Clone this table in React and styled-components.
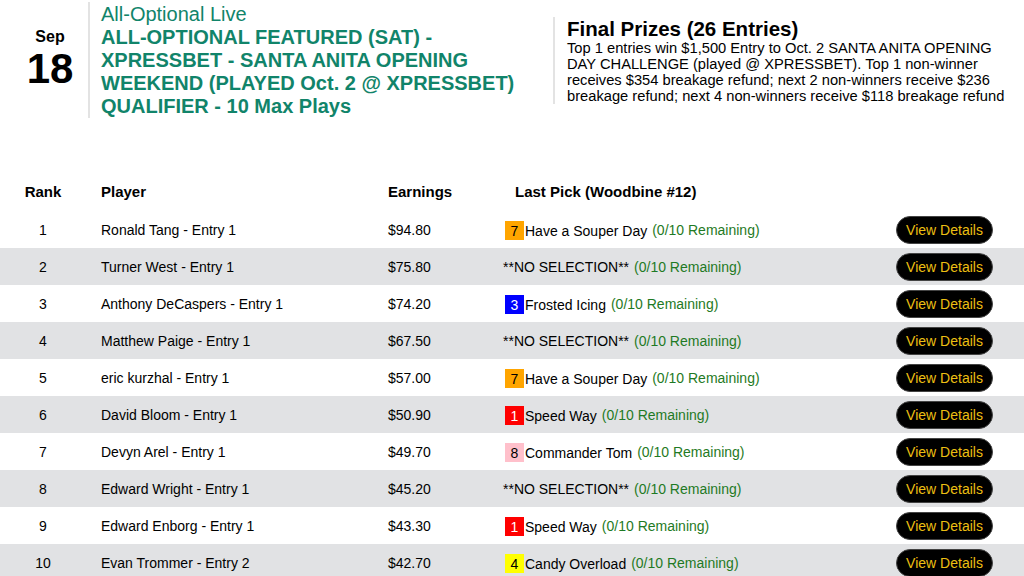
import React from "react";
import styled, { createGlobalStyle } from "styled-components";

const Global = createGlobalStyle`
  html, body { margin: 0; padding: 0; background: #fff; }
  body { font-family: "Liberation Sans", Arial, sans-serif; color: #000; }
`;

const Page = styled.div`
  width: 1024px;
`;

const Header = styled.header`
  display: flex;
  align-items: center;
  padding-top: 2px;
`;

const DateBox = styled.div`
  box-sizing: border-box;
  width: 88px;
  padding-left: 12px;
  display: flex;
  flex-direction: column;
  align-items: center;
  font-weight: bold;
`;

const Month = styled.div`
  font-size: 16px;
  line-height: 18px;
`;

const Day = styled.div`
  font-size: 42px;
  line-height: 46px;
`;

const TitleBox = styled.div`
  width: 435px;
  border-left: 2px solid #e3e3e3;
  padding-left: 11px;
  color: #11846a;
  font-size: 20px;
`;

const Sub = styled.div`
  line-height: 24px;
`;

const Title = styled.div`
  font-weight: bold;
  line-height: 23px;
`;

const Prizes = styled.div`
  margin-left: 17px;
  border-left: 2px solid #e3e3e3;
  padding-left: 12px;
  width: 440px;
`;

const PrizeTitle = styled.div`
  font-size: 20.5px;
  line-height: 23px;
  font-weight: bold;
`;

const PrizeText = styled.div`
  font-size: 14.7px;
  line-height: 16px;
`;

const Table = styled.div`
  margin-top: 53px;
  display: flex;
  flex-direction: column;
`;

const Row = styled.div`
  display: grid;
  grid-template-columns: 86px 287px 115px 1fr auto;
  align-items: center;
  height: ${(p) => (p.$head ? 40 : 37)}px;
  background: ${(p) => (p.$alt ? "#e1e2e4" : "#fff")};
  font-size: ${(p) => (p.$head ? 15 : 14)}px;
  font-weight: ${(p) => (p.$head ? "bold" : "normal")};
  padding-right: 31px;
`;

const RankCell = styled.div`
  text-align: center;
`;

const Cell = styled.div`
  padding-left: ${(p) => p.$pad || 15}px;
  white-space: nowrap;
`;

const PickCell = styled.div`
  padding-left: ${(p) => p.$pad || 15}px;
  display: flex;
  align-items: center;
  white-space: nowrap;
`;

const Badge = styled.span`
  display: inline-flex;
  align-items: center;
  justify-content: center;
  width: 19px;
  height: 19px;
  margin-left: 2px;
  margin-right: 1px;
  margin-top: 2px;
  font-size: 14px;
  background: ${(p) => p.$bg};
  color: ${(p) => p.$fg};
`;

const Horse = styled.span`
  margin-top: 2px;
`;

const Remaining = styled.span`
  color: #1f7a24;
  margin-left: 5px;
`;

const Button = styled.button`
  width: 97px;
  height: 28px;
  border-radius: 14px;
  background: #000;
  border: 1px solid #444;
  color: #ecbf12;
  font-family: "Liberation Sans", Arial, sans-serif;
  font-size: 14px;
  padding: 0;
  cursor: pointer;
`;

const badgeColors = {
  1: ["#ff0000", "#fff"],
  3: ["#0000ff", "#fff"],
  4: ["#ffff00", "#000"],
  7: ["#ffa500", "#000"],
  8: ["#ffc0cb", "#000"],
};

const rows = [
  ["1", "Ronald Tang - Entry 1", "$94.80", 7, "Have a Souper Day"],
  ["2", "Turner West - Entry 1", "$75.80", null],
  ["3", "Anthony DeCaspers - Entry 1", "$74.20", 3, "Frosted Icing"],
  ["4", "Matthew Paige - Entry 1", "$67.50", null],
  ["5", "eric kurzhal - Entry 1", "$57.00", 7, "Have a Souper Day"],
  ["6", "David Bloom - Entry 1", "$50.90", 1, "Speed Way"],
  ["7", "Devyn Arel - Entry 1", "$49.70", 8, "Commander Tom"],
  ["8", "Edward Wright - Entry 1", "$45.20", null],
  ["9", "Edward Enborg - Entry 1", "$43.30", 1, "Speed Way"],
  ["10", "Evan Trommer - Entry 2", "$42.70", 4, "Candy Overload"],
];

export default function App() {
  return (
    <Page>
      <Global />
      <Header>
        <DateBox>
          <Month>Sep</Month>
          <Day>18</Day>
        </DateBox>
        <TitleBox>
          <Sub>All-Optional Live</Sub>
          <Title>
            ALL-OPTIONAL FEATURED (SAT) - XPRESSBET - SANTA ANITA OPENING
            WEEKEND (PLAYED Oct. 2 @ XPRESSBET) QUALIFIER - 10 Max Plays
          </Title>
        </TitleBox>
        <Prizes>
          <PrizeTitle>Final Prizes (26 Entries)</PrizeTitle>
          <PrizeText>
            Top 1 entries win $1,500 Entry to Oct. 2 SANTA ANITA OPENING DAY
            CHALLENGE (played @ XPRESSBET). Top 1 non-winner receives $354
            breakage refund; next 2 non-winners receive $236 breakage refund;
            next 4 non-winners receive $118 breakage refund
          </PrizeText>
        </Prizes>
      </Header>
      <Table>
        <Row $head>
          <RankCell>Rank</RankCell>
          <Cell>Player</Cell>
          <Cell>Earnings</Cell>
          <Cell $pad={27}>Last Pick (Woodbine #12)</Cell>
          <div />
        </Row>
        {rows.map(([rank, name, earn, num, horse], i) => (
          <Row key={rank} $alt={i % 2 === 1}>
            <RankCell>{rank}</RankCell>
            <Cell>{name}</Cell>
            <Cell>{earn}</Cell>
            <PickCell>
              {num ? (
                <>
                  <Badge $bg={badgeColors[num][0]} $fg={badgeColors[num][1]}>
                    {num}
                  </Badge>
                  <Horse>{horse}</Horse>
                </>
              ) : (
                <span>**NO SELECTION**</span>
              )}
              <Remaining>(0/10 Remaining)</Remaining>
            </PickCell>
            <Button>View Details</Button>
          </Row>
        ))}
      </Table>
    </Page>
  );
}
